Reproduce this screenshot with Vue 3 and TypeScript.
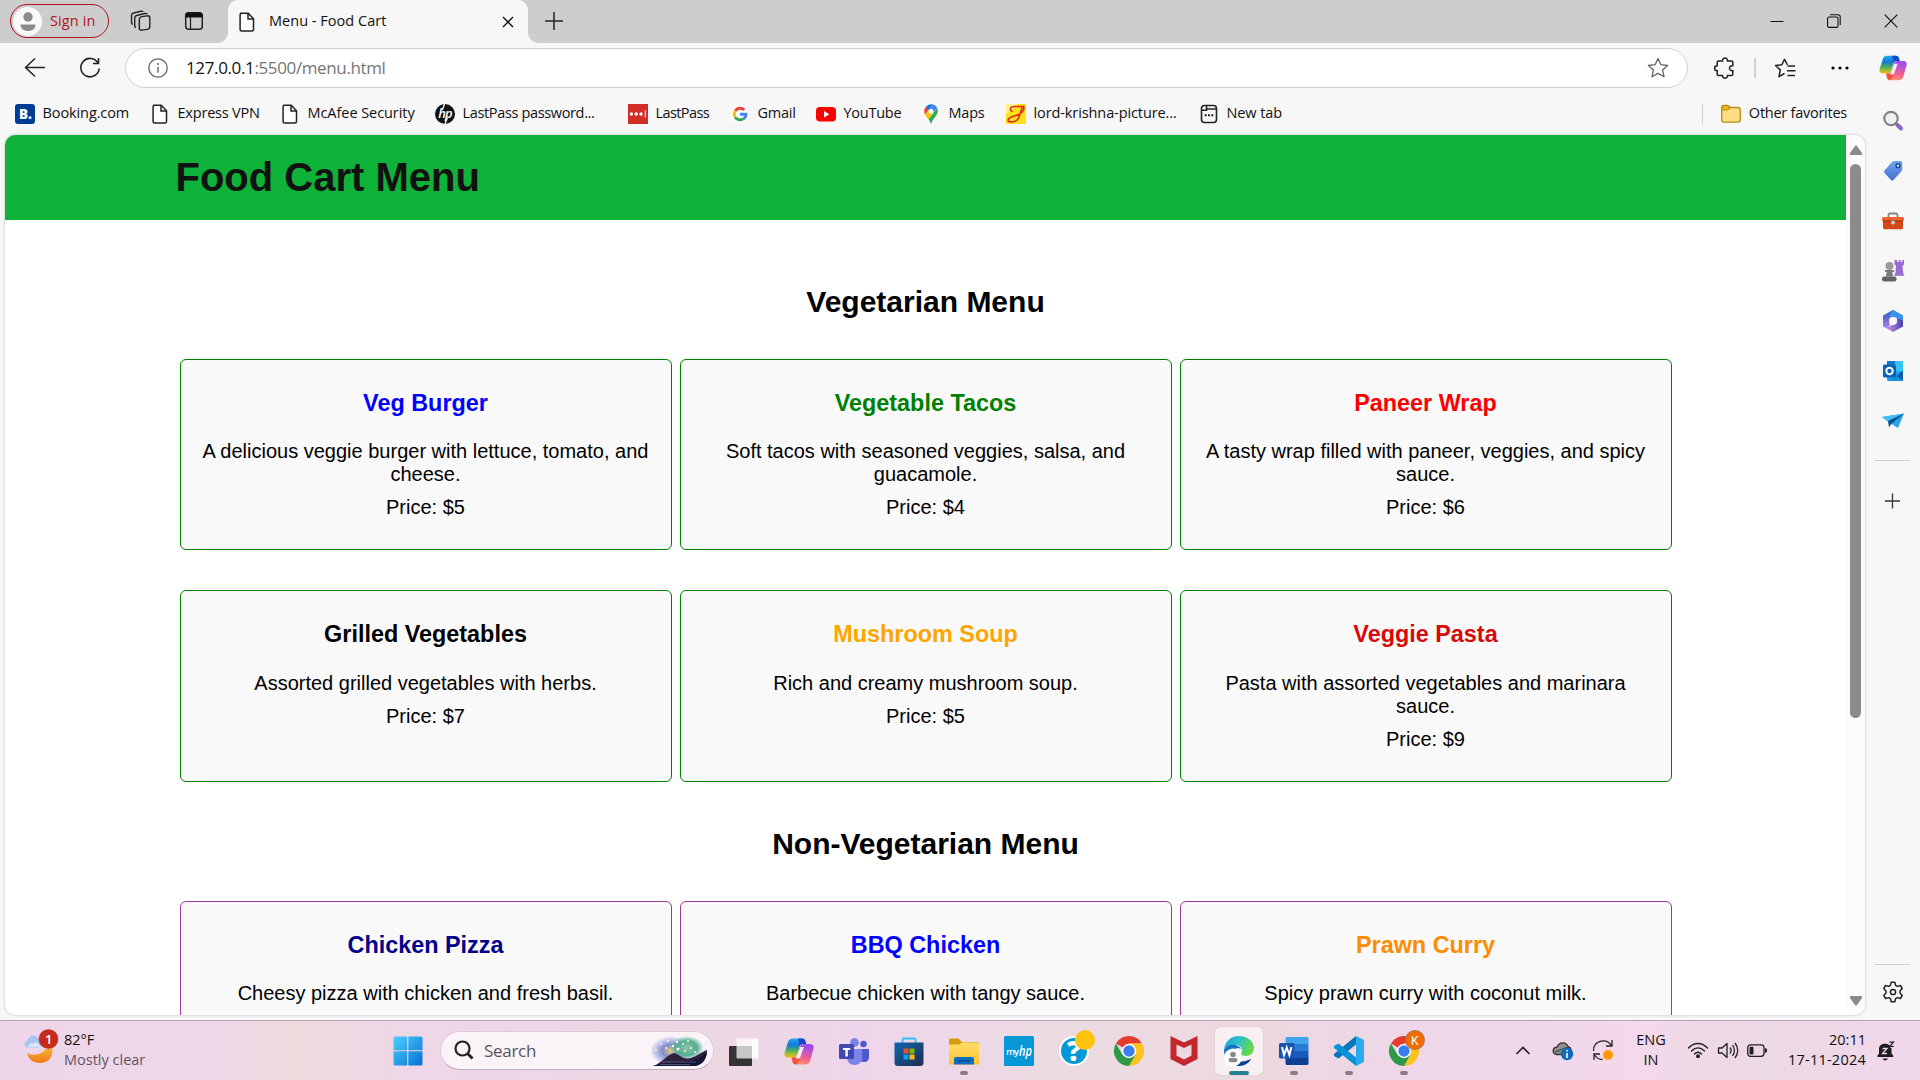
<script setup lang="ts">
interface Bookmark { label: string; icon: string; width: number; tracking: number }
interface Dish { name: string; color: string; text: string; price?: string }
interface TaskApp { icon: string; mark?: 'idle' | 'active' }

const page = '<path d="M3.2 1.2h8l5.3 5.6v10.7c0 .9-.6 1.5-1.5 1.5H4.6c-.9 0-1.500-.6-1.500-1.500V2.700c0-.9.600-1.500 1.500-1.500z" fill="#fff" stroke="#222" stroke-width="1.500"/><path d="M11 1.500v5.500h5.500" fill="none" stroke="#222" stroke-width="1.500"/>'
const copilot = '<path d="M9 1h9c2 0 3 1 3.500 3l.7 2.500h-3c-2 0-3 .7-3.600 2.600L13 17c-.700 2-1.600 3-3.600 3H4c-3 0-4-2.200-3.300-4.800L4 4.500C4.800 2.200 6.200 1 9 1z" fill="url(#cpA)"/><path d="M14 1h4c2 0 3 1 3.500 3l.7 2.500h-3c-1.800 0-2.800.5-3.500 2z" fill="#1c48c8"/><path d="M21 27h-9c-2 0-3-1-3.500-3l-.900-4h2c2 0 3-.8 3.600-2.600L16 9.500c.7-2 1.700-3 3.700-3H26c3 0 4.300 2.200 3.500 4.800L26 23.500c-.8 2.300-2.200 3.500-5 3.500z" fill="url(#cpB)"/><path d="M8.200 22l-.6-2h2c2 0 3-.8 3.600-2.600l1.200-3.400 1 8.500-3.400 4.500c-2 0-3-1-3.500-3z" fill="#f0503c"/><path d="M16.400 9.500h3.500l-3.400 9.800c-.4 1.200-1.100 1.700-2 1.700h-2.800z" fill="#f4ecf5"/>'
const chrome = '<path d="M15 15L2 7.500A15 15 0 0 1 28 7.500H15z" fill="#e33b2e"/><path d="M28 7.500A15 15 0 0 1 15 30l6.500-11.300L15 7.500z" fill="#fcc31e"/><path d="M15 30A15 15 0 0 1 2 7.500l6.500 11.300L15 22l6.500-3.300z" fill="#2c9a46"/><circle cx="15" cy="15" r="7.200" fill="#fff"/><circle cx="15" cy="15" r="5.700" fill="#3b7ded"/>'

const bookmarkIcons: Record<string, string> = {
  booking: '<rect width="20" height="20" rx="3" fill="#003b95"/><text x="4" y="15" font-family="Open Sans, sans-serif" font-size="13.500" font-weight="800" fill="#fff">B.</text>',
  page,
  hp: '<circle cx="10" cy="10" r="10" fill="#111"/><text x="3.200" y="14" font-family="Open Sans, sans-serif" font-size="13" font-weight="600" font-style="italic" textLength="14" fill="#fff">hp</text><path d="M9.500 0L7.300 6M12.300 14l-2.400 6" stroke="#fff" stroke-width="1.300"/>',
  lastpass: '<rect width="20" height="20" fill="#d32d27"/><g fill="#fff"><circle cx="3.400" cy="10" r="1.700"/><circle cx="8.200" cy="10" r="1.700"/><circle cx="13" cy="10" r="1.700"/><rect x="16.800" y="6.500" width="1" height="7"/></g>',
  google: '<circle cx="10" cy="10" r="9.500" fill="#fff"/><g fill="none" stroke-width="2.900"><path d="M5.100 7A5.900 5.900 0 0 1 14.300 6" stroke="#ea4335"/><path d="M5.100 7a6 6 0 0 0 0 6.200" stroke="#fbbc05"/><path d="M5.100 13.200a5.900 5.900 0 0 0 8.500 1.500" stroke="#34a853"/><path d="M10 10.200h6c0 1.900-.8 3.500-2.300 4.500" stroke="#4285f4"/></g>',
  youtube: '<rect y="3" width="20" height="14.500" rx="4" fill="#f00"/><path d="M8 7l5.300 3.200L8 13.500z" fill="#fff"/>',
  maps: '<path d="M3.200 7.300a6.800 6.800 0 0 1 1.700-4.600L8 5.500l-4 5c-.5-1-.8-2-.8-3.200z" fill="#ea4335"/><path d="M4.900 2.700A6.700 6.700 0 0 1 12.300.6L7.600 6z" fill="#1a73e8"/><path d="M12.300.6a6.800 6.800 0 0 1 4 3.600l-4.500 5.300L7.600 6z" fill="#4285f4"/><path d="M4 10.500L7.600 6l4.200 3.500-4.300 5.800C6 13.700 4.800 12.300 4 10.500z" fill="#fbbc04"/><path d="M16.300 4.200c1.400 3.200.1 6-2 8.500-2.100 2.400-3.100 4.300-4.300 7.300-.6-1.700-1.300-3.200-2.500-4.700z" fill="#34a853"/><circle cx="10" cy="7.300" r="2.500" fill="#fff"/>',
  krishna: '<rect width="20" height="20" fill="#ffe11a"/><path d="M0 0h12L5 7 0 10z" fill="#fff38a"/><path d="M6.500 7.500C3 6.500 4 2.500 8 2.500h8.500C15 5 14.500 12 11.500 15.500 8.500 19 1.500 18.500 2 16c.7-3.500 9-4 12.500-6.500 3-2 4-5 3-8" fill="none" stroke="#e0291c" stroke-width="1.500"/>',
  newtab: '<rect x="2.500" y="1.500" width="15" height="17" rx="3" fill="none" stroke="#222" stroke-width="1.600"/><path d="M3 6.200h4.500V2M7.500 5H17" fill="none" stroke="#222" stroke-width="1.500"/><path d="M5.700 11.300h2M9 11.300h2M12.300 11.300h2" stroke="#222" stroke-width="1.900"/>',
}

const bookmarks: Bookmark[] = [
  { label: 'Booking.com', icon: 'booking', width: 135, tracking: -0.1 },
  { label: 'Express VPN', icon: 'page', width: 130, tracking: -0.2 },
  { label: 'McAfee Security', icon: 'page', width: 155, tracking: -0.06 },
  { label: 'LastPass password...', icon: 'hp', width: 193, tracking: -0.35 },
  { label: 'LastPass', icon: 'lastpass', width: 102, tracking: -0.6 },
  { label: 'Gmail', icon: 'google', width: 86, tracking: -0.25 },
  { label: 'YouTube', icon: 'youtube', width: 105, tracking: -0.25 },
  { label: 'Maps', icon: 'maps', width: 85, tracking: -0.2 },
  { label: 'lord-krishna-picture...', icon: 'krishna', width: 193, tracking: -0.1 },
  { label: 'New tab', icon: 'newtab', width: 90, tracking: -0.1 },
]

const vegetarian: Dish[] = [
  { name: 'Veg Burger', color: 'blue', text: 'A delicious veggie burger with lettuce, tomato, and cheese.', price: '$5' },
  { name: 'Vegetable Tacos', color: 'green', text: 'Soft tacos with seasoned veggies, salsa, and guacamole.', price: '$4' },
  { name: 'Paneer Wrap', color: 'red', text: 'A tasty wrap filled with paneer, veggies, and spicy sauce.', price: '$6' },
  { name: 'Grilled Vegetables', color: 'black', text: 'Assorted grilled vegetables with herbs.', price: '$7' },
  { name: 'Mushroom Soup', color: 'orange', text: 'Rich and creamy mushroom soup.', price: '$5' },
  { name: 'Veggie Pasta', color: '#d80909', text: 'Pasta with assorted vegetables and marinara sauce.', price: '$9' },
]
const nonVegetarian: Dish[] = [
  { name: 'Chicken Pizza', color: 'darkblue', text: 'Cheesy pizza with chicken and fresh basil.' },
  { name: 'BBQ Chicken', color: 'blue', text: 'Barbecue chicken with tangy sauce.' },
  { name: 'Prawn Curry', color: 'darkorange', text: 'Spicy prawn curry with coconut milk.' },
]

const sidebarIcons: string[] = [
  '<circle cx="9" cy="8.500" r="6.700" fill="#eef2f3" stroke="#858585" stroke-width="2.200"/><path d="M15.500 15l3.500 3.500" stroke="#8f62cf" stroke-width="4" stroke-linecap="round"/><path d="M13.500 13l1.500 1.500" stroke="#777" stroke-width="2.500"/>',
  '<path d="M2.500 10.500L10 2c.6-.7 1.300-1 2.200-1h6.500c.9 0 1.500.6 1.500 1.500v6.800c0 .8-.3 1.500-.9 2.100l-8 8.500c-.6.700-1.600.7-2.300 0l-6.500-7c-.6-.7-.6-1.700 0-2.400z" fill="url(#tag)"/><circle cx="16" cy="5.700" r="1.900" fill="#e6efff" stroke="#28468c" stroke-width="1.500"/>',
  '<path d="M6.500 8V5c0-.9.600-1.500 1.500-1.500h6c.9 0 1.500.6 1.500 1.500v3" fill="none" stroke="#858585" stroke-width="1.800"/><rect x="0" y="7" width="22" height="4" rx="1.500" fill="#f0622d"/><path d="M1 11h20v7c0 .700-.5 1.200-1.200 1.200H2.200C1.500 19.200 1 18.700 1 18z" fill="#d4481a"/><path d="M1 11h20" stroke="#8d2a0b"/><circle cx="11" cy="12.500" r="2" fill="#d0d0d0"/>',
  '<path d="M13 0h2v2h1.700V0h2v2h1.600V0H22v4.500l-1.500 1.300.7 7.700 1 1v1.200h-9.800v-1.200l1-1 .6-7.700-1.500-1.300V0z" fill="#9a6bd0"/><circle cx="7.500" cy="6" r="4" fill="#9a9a9a"/><path d="M3 10h9v2h-1.800l1 4.500H3.800l1-4.500H3z" fill="#7b7b7b"/><rect x="0" y="16.500" width="14.500" height="5" rx="2" fill="#656565"/>',
  '<path d="M11 0L1 5.500v11L6 19l2-5.500V8l8-5z" fill="url(#m365a)"/><path d="M11 0l10 5.500V15l-6-1V8.500L8 4z" fill="#2f9fee"/><path d="M21 10v6.500L11 22l-7-4 7-3.500 4-2.500V8z" fill="url(#m365b)"/><path d="M11 0L7 6l4 2 4-1 6 4V5.500z" fill="#3b93e8"/><circle cx="11" cy="11" r="4" fill="#f7f7f7"/>',
  '<rect x="5" y="1" width="16" height="20" rx="1.500" fill="#1ba2e8"/><path d="M5 1h8v10H5z" fill="#0b78cb"/><path d="M13 1h8v10h-8z" fill="#36c2f2"/><path d="M21 11v10H6z" fill="#1490df"/><path d="M21 11l-7 5 7 4z" fill="#0f5aa5"/><rect x="1" y="4.500" width="13" height="13" rx="1.500" fill="#0964b8"/><circle cx="7.500" cy="11" r="3.200" fill="none" stroke="#fff" stroke-width="2"/>',
  '<path d="M0 7l22-3.500-6 14.500-6.500-4z" fill="#25a4e8"/><path d="M0 7l22-3.500L6 11.500z" fill="#43bdf3"/><path d="M22 3.500L6 11l1 6.500 2.500-4z" fill="#0a4f93"/>',
]

const apps: TaskApp[] = [
  { icon: '<rect x="0" y="10" width="23" height="20" rx="1" fill="#333"/><rect x="7.500" y="2.500" width="22" height="20" rx="1" fill="#fff" opacity=".72"/><rect x="23" y="3" width="6" height="19" fill="#fff" opacity=".6"/>' },
  { icon: `<g transform="translate(0 1.500)">${copilot}</g>` },
  { icon: '<circle cx="15.500" cy="6.500" r="4.400" fill="#7b83eb"/><circle cx="24.500" cy="8" r="3.200" fill="#5059c9"/><path d="M20 13h10v8c0 3-2 5-5 5s-5-2-5-5z" fill="#5059c9"/><path d="M8 13h15v8.500C23 26 20 29 15.500 29S8 26 8 21.500z" fill="#7b83eb"/><rect x="0" y="8" width="15" height="15" rx="1.500" fill="#4148b0"/><path d="M4 12h7.200v2H8.800v6.500H6.400V14H4z" fill="#fff"/>' },
  { icon: '<path d="M8.500 7V3.500c0-.6.400-1 1-1h11c.6 0 1 .4 1 1V7" fill="none" stroke="#2bc3f5" stroke-width="1.800"/><path d="M.5 6.500h29V26c0 3-1 4-4 4h-21c-3 0-4-1-4-4z" fill="url(#store)"/><path d="M9.500 12.500h5v5h-5z" fill="#f25022"/><path d="M15.500 12.500h5v5h-5z" fill="#7fba00"/><path d="M9.500 18.500h5v5h-5z" fill="#00a4ef"/><path d="M15.500 18.500h5v5h-5z" fill="#ffb900"/>' },
  { icon: '<path d="M0 4c0-1 .6-1.500 1.500-1.500h8L13 6h15c1.200 0 2 .6 2 1.500V14H0z" fill="#d79a10"/><path d="M0 8.500h10L13 6.500h15c1.200 0 2 .6 2 1.500v20.500H0z" fill="url(#folder)"/><path d="M5 28.500V23c0-1.200.8-2 2-2h16c1.200 0 2 .8 2 2v5.500z" fill="#0d6fc4"/><path d="M8.500 25h13" stroke="#0a3f79" stroke-width="1.200"/>', mark: 'idle' },
  { icon: '<rect width="30" height="30" rx="1.500" fill="#0597d6"/><text x="2" y="18.500" font-family="Open Sans, sans-serif" font-size="9.500" font-weight="600" textLength="13" fill="#fff">my</text><text x="15" y="19.500" font-family="Open Sans, sans-serif" font-size="14" font-weight="600" font-style="italic" textLength="13" lengthAdjust="spacingAndGlyphs" fill="#fff">hp</text>' },
  { icon: '<circle cx="15" cy="15" r="15" fill="#fff"/><circle cx="15" cy="15" r="13" fill="#0597d6"/><text x="8" y="25" font-family="Open Sans, sans-serif" font-size="28" font-weight="800" fill="#fff">?</text><circle cx="26" cy="4" r="10" fill="#ffc20e"/>' },
  { icon: chrome },
  { icon: '<path d="M1.500 0L15 6.500 28.500 0v23L15 30 1.500 23zM7.500 8.500v11L15 23.500l7.500-4v-11L15 12z" fill="#c1272d" fill-rule="evenodd"/>' },
  { icon: '<path d="M0 14C1 5 7 0 15 0c9 0 15 6 15 12 0 5-4 8-8 8-3 0-5-1-5-2 0-1 1-1 1-4 0-3-3-5-7-5C6 9 2 10 0 14z" fill="url(#edge)"/><path d="M0 14c2-4 6-6 11-5 3 .6 5 2 6 4-5-3-8 1-7 6 1 5 6 8 12 6l5-2c-3 5-8 7-13 7C6 30 0 23 0 14z" fill="#1272c5"/><path d="M10 19c0 7 8 9 17 4-4 7-13 9-19 4z" fill="#0b3f89"/><circle cx="9" cy="21.500" r="9" fill="#fff"/><circle cx="9" cy="18.500" r="2.800" fill="#888"/><rect x="4.500" y="22" width="9" height="4.200" rx="2.100" fill="#888"/>', mark: 'active' },
  { icon: '<path d="M6.500 2.500c0-.8.600-1.500 1.500-1.500h20c.9 0 1.500.7 1.500 1.500V8h-23z" fill="#41a5ee"/><path d="M6.500 8h23v7h-23z" fill="#2b7cd3"/><path d="M6.500 15h23v7h-23z" fill="#185abd"/><path d="M6.500 22h23v5.500c0 .9-.6 1.500-1.500 1.500H8c-.900 0-1.500-.6-1.500-1.500z" fill="#103f91"/><rect x="0" y="7" width="15.500" height="15.500" rx="1.500" fill="#1853ae"/><path d="M3 11l2 8 2.700-7.500 2.700 7.500 2-8" fill="none" stroke="#fff" stroke-width="2"/>', mark: 'idle' },
  { icon: '<path d="M22 0L30 4v22l-8 4z" fill="#2aabed"/><path d="M22 0v8.500L4.500 22.500 0 20v-2z" fill="#0477bd"/><path d="M22 30v-8.500L4.500 7.500 0 10v2z" fill="#0a93d8"/>', mark: 'idle' },
  { icon: chrome + '<circle cx="26" cy="4" r="10" fill="#9c7468"/><circle cx="26" cy="4" r="9.200" fill="#ef6c00"/><text x="22" y="8.500" font-family="Roboto, sans-serif" font-size="12" fill="#fff">K</text>', mark: 'idle' },
]
</script>

<template>
  <div class="screen">
    <svg class="defs" width="0" height="0">
      <defs>
        <linearGradient id="cpA" x1="0" y1="0" x2="0" y2="1"><stop offset="0" stop-color="#22aaf2" /><stop offset=".35" stop-color="#1477d4" /><stop offset=".65" stop-color="#55b355" /><stop offset="1" stop-color="#f7c414" /></linearGradient>
        <linearGradient id="cpB" x1="0.3" y1="0" x2="0" y2="1"><stop offset="0" stop-color="#a24df0" /><stop offset=".5" stop-color="#ef5c96" /><stop offset="1" stop-color="#ffa05e" /></linearGradient>
        <linearGradient id="tag" x1="0" y1="0" x2="0" y2="1"><stop offset="0" stop-color="#70a7f3" /><stop offset="1" stop-color="#426fcf" /></linearGradient>
        <linearGradient id="m365a" x1="0" y1="0" x2="0" y2="1"><stop offset="0" stop-color="#2a57c7" /><stop offset="1" stop-color="#b884ea" /></linearGradient>
        <linearGradient id="m365b" x1="0" y1="0" x2="1" y2="0"><stop offset="0" stop-color="#d296e8" /><stop offset="1" stop-color="#4b3fb0" /></linearGradient>
        <linearGradient id="store" x1="0" y1="0" x2="1" y2="1"><stop offset="0" stop-color="#0d66b0" /><stop offset="1" stop-color="#1f2d4d" /></linearGradient>
        <linearGradient id="folder" x1="0" y1="0" x2="0" y2="1"><stop offset="0" stop-color="#ffdc6a" /><stop offset="1" stop-color="#fcc42c" /></linearGradient>
        <linearGradient id="edge" x1="0" y1="0" x2="1" y2=".4"><stop offset="0" stop-color="#1b9be0" /><stop offset=".5" stop-color="#2cc2c9" /><stop offset="1" stop-color="#67d84b" /></linearGradient>
        <linearGradient id="win" x1="0" y1="0" x2="1" y2="1"><stop offset="0" stop-color="#4fd0ff" /><stop offset="1" stop-color="#0370cf" /></linearGradient>
        <linearGradient id="moon" x1="0" y1="0" x2="0" y2="1"><stop offset="0" stop-color="#f7b52e" /><stop offset="1" stop-color="#ee7a1c" /></linearGradient>
        <radialGradient id="glowA"><stop offset="0" stop-color="#f0c97c" /><stop offset=".4" stop-color="#7f8ec8" /><stop offset="1" stop-color="#6b7fe0" stop-opacity="0" /></radialGradient>
        <radialGradient id="glowB"><stop offset="0" stop-color="#8fc5a4" /><stop offset=".6" stop-color="#56ad98" /><stop offset="1" stop-color="#50b59f" stop-opacity="0" /></radialGradient>
      </defs>
    </svg>

    <header class="titlebar">
      <div class="signin">
        <span class="avatar"><svg width="29" height="29" viewBox="0 0 29 29"><circle cx="15" cy="10" r="4.700" fill="#8b8b8b" /><path d="M7.500 17.500h15c0 4-3 6.500-7.500 6.500s-7.500-2.500-7.500-6.500z" fill="#8b8b8b" /></svg></span>
        <span class="signin-text">Sign in</span>
      </div>
      <svg class="ic-work" width="22" height="22" viewBox="0 0 22 22" fill="none" stroke="#222" stroke-width="1.400"><rect x="9.300" y="6.300" width="10.500" height="13.500" rx="2.500" transform="skewY(-8) translate(0 2)" /><path d="M6 17.500c-1-.4-1.300-1-1.300-2V8c0-1.300.7-2.200 2-2.500L15 3.500c1-.2 1.700 0 2.200.7M2.700 14.500c-1-.5-1.200-1-1.200-2V5.500c0-1.300.7-2.200 2-2.500L11 1.200c1-.2 1.700 0 2.300.7" /></svg>
      <svg class="ic-tabs" width="20" height="20" viewBox="0 0 20 20"><rect x="1.700" y="1.700" width="16.600" height="16.600" rx="3" fill="none" stroke="#222" stroke-width="1.500" /><path d="M1.500 6.500V4.500c0-2 1-3 3-3h11c2 0 3 1 3 3v2z" fill="#111" /><path d="M6.500 6v12" stroke="#222" stroke-width="1.300" /></svg>
      <div class="tab">
        <svg width="20" height="20" viewBox="0 0 20 20" v-html="page" />
        <span class="tab-title">Menu - Food Cart</span>
        <svg class="tab-close" width="12" height="12" viewBox="0 0 12 12"><path d="M1 1l10 10M11 1L1 11" stroke="#111" stroke-width="1.400" /></svg>
      </div>
      <svg class="ic-plus" width="18" height="18" viewBox="0 0 18 18"><path d="M9 0v18M0 9h18" stroke="#222" stroke-width="1.500" /></svg>
      <div class="controls">
        <svg width="14" height="14" viewBox="0 0 14 14"><path d="M.5 7.500h13" stroke="#111" /></svg>
        <svg width="14" height="14" viewBox="0 0 14 14" fill="none" stroke="#111" stroke-width="1.100"><rect x=".6" y="3" width="10.400" height="10.400" rx="1.500" /><path d="M3 .7h8c1.300 0 2.200.8 2.200 2.200v8" /></svg>
        <svg width="14" height="14" viewBox="0 0 14 14"><path d="M.7.700l12.600 12.600M13.300.7L.7 13.300" stroke="#111" stroke-width="1.200" /></svg>
      </div>
    </header>

    <nav class="toolbar">
      <svg class="ic-back" width="22" height="24" viewBox="0 0 22 24" fill="none" stroke="#222" stroke-width="1.500"><path d="M21 11.500H2M11 2.500l-9.500 9 9.500 9" /></svg>
      <svg class="ic-reload" width="22" height="26" viewBox="0 0 22 26" fill="none" stroke="#222" stroke-width="1.600"><path d="M19 8A9.200 9.200 0 1 0 20.200 13.500M19.500 3v5.500H14" /></svg>
      <div class="address">
        <svg class="ic-info" width="20" height="20" viewBox="0 0 20 20"><circle cx="10" cy="10" r="9.200" fill="none" stroke="#666" stroke-width="1.300" /><path d="M10 8.700v6" stroke="#666" stroke-width="1.400" /><circle cx="10" cy="5.900" r="1" fill="#666" /></svg>
        <span class="url">127.0.0.1<i>:5500/menu.html</i></span>
        <svg class="ic-star" width="22" height="22" viewBox="0 0 22 22"><path d="M11 1.500l2.900 6.200 6.700.8-5 4.600 1.400 6.600-6-3.300-6 3.300 1.400-6.600-5-4.600 6.700-.8z" fill="none" stroke="#666" stroke-width="1.300" stroke-linejoin="round" /></svg>
      </div>
      <svg class="ic-ext" width="22" height="22" viewBox="0 0 22 22"><path d="M4.500 4h4c-.3-4 5.300-4 5 0h4c.8 0 1.300.5 1.300 1.300v3.400c-4.400-.5-4.400 5.500 0 5v3.500c0 .8-.5 1.300-1.300 1.300h-4c.3 3.700-5.300 3.700-5 0h-4c-.8 0-1.300-.5-1.300-1.300v-3.500c-3.400 0-3.400-5 0-5V5.300C3.200 4.500 3.700 4 4.500 4z" fill="none" stroke="#222" stroke-width="1.500" /></svg>
      <span class="sep"></span>
      <svg class="ic-fav" width="22" height="22" viewBox="0 0 22 22" fill="none" stroke="#222" stroke-width="1.500" stroke-linejoin="round"><path d="M13.500 8l-3-5.700-2.600 5.500-6.400.7 4.800 4.400L5 19.700l5.500-3.200M13.500 9H21M13 13.700h8.500M13.500 18.400H21" /></svg>
      <svg class="ic-dots" width="18" height="4" viewBox="0 0 18 4"><circle cx="2" cy="2" r="1.600" /><circle cx="9" cy="2" r="1.600" /><circle cx="16" cy="2" r="1.600" /></svg>
      <svg class="ic-copilot" width="28" height="28" viewBox="0 0 30 28" v-html="copilot" />
    </nav>

    <div class="middle">
      <div class="left">
        <div class="bookmarks">
          <div v-for="b in bookmarks" :key="b.label" class="bookmark" :style="{ width: b.width + 'px', letterSpacing: b.tracking + 'px' }">
            <svg width="20" height="20" viewBox="0 0 20 20" v-html="bookmarkIcons[b.icon]" />
            <span>{{ b.label }}</span>
          </div>
          <div class="others">
            <svg width="20" height="20" viewBox="0 0 20 20"><path d="M.7 4c0-1.500.8-2.500 2.300-2.500h3c1.500 0 2 2 3.500 2H17c1.500 0 2.300.8 2.300 2.300v10c0 1.500-.8 2.300-2.300 2.300H3c-1.500 0-2.300-.8-2.300-2.300z" fill="#ffdd80" stroke="#b98b1a" stroke-width="1.300" /><path d="M.7 6h5c1.500 0 2-1 3.500-2.500C8 2 7 1.500 6 1.500H3C1.500 1.500.7 2.500.7 4z" fill="#e9b71d" stroke="#b98b1a" stroke-width="1.200" /></svg>
            <span>Other favorites</span>
          </div>
        </div>
        <main class="viewport">
          <div class="document">
            <div class="banner"><h1>Food Cart Menu</h1></div>
            <section class="menu">
              <h2>Vegetarian Menu</h2>
              <div class="cards">
                <article v-for="d in vegetarian" :key="d.name" class="card">
                  <h3 :style="{ color: d.color }">{{ d.name }}</h3>
                  <p>{{ d.text }}</p>
                  <p>Price: {{ d.price }}</p>
                </article>
              </div>
              <h2 class="second">Non-Vegetarian Menu</h2>
              <div class="cards">
                <article v-for="d in nonVegetarian" :key="d.name" class="card purple">
                  <h3 :style="{ color: d.color }">{{ d.name }}</h3>
                  <p>{{ d.text }}</p>
                </article>
              </div>
            </section>
          </div>
          <div class="scrollbar">
            <svg width="14" height="10" viewBox="0 0 14 10"><path d="M6 1Q7-.3 8 1l5 7q.7 2-1 2H2q-1.700 0-1-2z" fill="#8b8b8b" /></svg>
            <span class="thumb"></span>
            <svg class="down" width="14" height="10" viewBox="0 0 14 10"><path d="M6 9q1 1.300 2 0l5-7q.7-2-1-2H2Q.3 0 1 2z" fill="#8b8b8b" /></svg>
          </div>
        </main>
      </div>
      <aside class="sidebar">
        <svg v-for="(s, i) in sidebarIcons" :key="i" width="22" height="22" viewBox="0 0 22 22" v-html="s" />
        <span class="rule"></span>
        <svg class="side-plus" width="16" height="16" viewBox="0 0 16 16"><path d="M7.500 .5v15M0 8h15" stroke="#333" stroke-width="1.300" /></svg>
        <div class="side-foot">
          <span class="rule"></span>
          <svg width="22" height="22" viewBox="0 0 22 22" fill="none" stroke="#222" stroke-width="1.500" stroke-linejoin="round"><path d="M9.200 1.200h3.600l.8 3.200 1.700 1 3.200-.9 1.800 3.100L18 10v2l2.300 2.400-1.800 3.100-3.200-.9-1.700 1-.8 3.200H9.200l-.8-3.200-1.700-1-3.200.9-1.800-3.100L4 12v-2L1.700 7.600l1.800-3.100 3.200.9 1.700-1z" /><circle cx="11" cy="11" r="2.600" /></svg>
        </div>
      </aside>
    </div>

    <footer class="taskbar">
      <div class="weather">
        <svg width="36" height="36" viewBox="0 0 36 36"><path d="M3 22c6 3 14 2 19-4l6.500-1C29 27 24 32 16 32 9 32 4 28 3 22z" fill="url(#moon)" /><path d="M4 16.500c-4-.3-5-5.500-.5-7C5 3.500 12 3 14 7.500c5 0 6 9 0 9z" fill="#a9c4ee" /><path d="M5 16c-2-3 2-5 4-3 2-3 7-1 7 3z" fill="#d8e5fa" /><circle cx="24.500" cy="8" r="9.800" fill="#c42b1c" /><text x="21" y="13" font-family="Open Sans, sans-serif" font-size="13" font-weight="600" fill="#fff">1</text></svg>
        <div class="weather-text"><span>82°F</span><span class="dim">Mostly clear</span></div>
      </div>
      <svg class="start" width="30" height="30" viewBox="0 0 30 30"><path d="M2 .5h12.200v13.700H.5V2Q.5.5 2 .5zM15.300.5H28q1.500 0 1.500 1.500v12.200H15.300zM.5 15.300h13.700v14.200H2q-1.500 0-1.500-1.500zM15.300 15.300h14.200V28q0 1.500-1.500 1.500H15.300z" fill="url(#win)" /></svg>
      <div class="search">
        <svg width="20" height="20" viewBox="0 0 20 20" fill="none" stroke="#222" stroke-width="2.200"><circle cx="8.500" cy="8.500" r="7" /><path d="M13.500 13.500l5 5" stroke-width="2.800" /></svg>
        <span>Search</span>
        <svg class="scene" width="62" height="34" viewBox="0 0 62 34"><ellipse cx="23" cy="17" rx="21" ry="15" fill="url(#glowA)" /><ellipse cx="39" cy="14" rx="17" ry="12" fill="url(#glowB)" /><path d="M6 32c8-4 13-11 20-13 5 1 8 6 14 5.500 8-1 12-6 19-8.500 0 8-4 14-11 16z" fill="#30213f" /><path d="M4 32c14-4 24-4 36-5s14-5 19-9c-1 9-6 14-14 14z" fill="#151536" /><path d="M14 28h34M12 30.500h30" stroke="#7b88b0" stroke-width=".8" opacity=".7" /><g fill="#fff5d8"><circle cx="8" cy="16" r="1" /><circle cx="13" cy="10" r="1" /><circle cx="20" cy="7" r="1" /><circle cx="25" cy="12" r="1.300" /><circle cx="29" cy="8" r="1.200" /><circle cx="30" cy="15" r="1.600" /><circle cx="35" cy="10" r="1" /><circle cx="37" cy="17" r="1" /><circle cx="43" cy="14" r="1" /><circle cx="40" cy="7" r="1" /><circle cx="18" cy="14" r="1" /><circle cx="47" cy="18" r="1" /></g></svg>
      </div>
      <div class="apps">
        <div v-for="(a, i) in apps" :key="i" class="app" :class="a.mark">
          <svg width="30" height="30" viewBox="0 0 30 30" v-html="a.icon" />
        </div>
      </div>
      <div class="tray">
        <svg class="t-chev" width="16" height="10" viewBox="0 0 16 10"><path d="M1.500 8L8 1.500 14.500 8" fill="none" stroke="#222" stroke-width="1.600" /></svg>
        <svg class="t-cloud" width="22" height="20" viewBox="0 0 22 20"><path d="M4.500 13.500C-.5 12.500.5 6.500 5 6 7 .5 14 .5 16 5.500c4 1 4 8 0 8z" fill="#909090" stroke="#333" stroke-width="1.300" /><path d="M3 11L16 6" stroke="#555" stroke-width="1.500" /><circle cx="15" cy="13" r="6.200" fill="#0f6cbd" /><path d="M15 12v5M15 9v1.600" stroke="#fff" stroke-width="1.600" /></svg>
        <svg class="t-sync" width="22" height="22" viewBox="0 0 22 22" fill="none" stroke="#222" stroke-width="1.300"><path d="M1.500 11C1 .5 14-2.500 19.500 5.500M20 0v6h-6M2 20v-6h6M2.500 15c2 3 4.500 4.500 8 4.500" /><circle cx="16" cy="15" r="5" fill="#ff9800" stroke="none" /></svg>
        <div class="lang"><span>ENG</span><span>IN</span></div>
        <svg class="t-wifi" width="22" height="18" viewBox="0 0 22 18" fill="none" stroke="#222" stroke-width="1.400" stroke-linecap="round"><path d="M1.500 6c5.500-6 13.500-6 19 0M4.500 9c4-4.200 9-4.200 13 0M7.500 12c2.200-2.300 4.800-2.300 7 0" /><circle cx="11" cy="14.300" r="1.300" fill="#222" /></svg>
        <svg class="t-vol" width="22" height="18" viewBox="0 0 22 18" fill="none" stroke="#222" stroke-width="1.300" stroke-linejoin="round"><path d="M1.500 6H5l5-4.500v14L5 11H1.500zM13 5.500c1.300 1.800 1.300 4.200 0 6M15.500 3.200c2.500 3 2.500 7.600 0 10.600M18 1c3.600 4.500 3.600 10.500 0 15" /></svg>
        <svg class="t-bat" width="20" height="14" viewBox="0 0 20 14"><rect x=".7" y=".8" width="16.300" height="11.500" rx="2.800" fill="none" stroke="#222" stroke-width="1.300" /><rect x="2.500" y="2.800" width="4" height="7.600" rx="1" fill="#222" /><path d="M18 4l2 1v3l-2 1z" fill="#222" /></svg>
        <div class="clock"><span>20:11</span><span class="date">17-11-2024</span></div>
        <svg class="t-bell" width="18" height="20" viewBox="0 0 18 20"><path d="M.5 16v-1.500L2 12.500V8c0-7 12-7 12.500 0v4.500l1.700 2V16z" fill="#1d1d1d" /><path d="M5.500 17.500h5.500c-1 2.500-4.500 2.500-5.500 0z" fill="#1d1d1d" /><path d="M5.500 7.500h4.500l-4.500 5h4.500" fill="none" stroke="#f0d8ea" stroke-width="1.300" /><path d="M11.500 0H18v6.500h-5z" fill="#f2d7eb" /><path d="M12.500 1.200h4l-3.800 4.200h4" fill="none" stroke="#1d1d1d" stroke-width="1.200" /></svg>
      </div>
    </footer>
  </div>
</template>

<style>
body { margin: 0; overflow: hidden; }
</style>

<style scoped>
* { box-sizing: border-box; }
svg { display: block; flex: none; overflow: visible; }
.defs { position: absolute; }
.screen { width: 1920px; height: 1080px; display: flex; flex-direction: column; background: #f7f7f7; color: #111; font-family: "Open Sans", "Noto Sans", sans-serif; font-size: 14.5px; white-space: nowrap; overflow: hidden; }

.titlebar { height: 43px; flex: none; display: flex; background: #cdcdcd; }
.signin { width: 99px; height: 34px; margin: 4px 0 0 10px; border: 1.5px solid #b3131b; border-radius: 17px; display: flex; align-items: center; color: #b3131b; }
.avatar { width: 29px; height: 29px; margin-left: 2px; border-radius: 50%; background: #f9f9f9; }
.signin-text { margin: -2px 0 0 8px; letter-spacing: 0.1px; }
.ic-work { margin: 10px 0 0 21px; }
.ic-tabs { margin: 11px 0 0 32px; }
.tab { position: relative; width: 300px; height: 43px; margin-left: 24px; padding: 0 14px 0 9px; display: flex; align-items: center; background: #f7f7f7; border-radius: 10px 10px 0 0; }
.tab::before, .tab::after { content: ""; position: absolute; bottom: 0; width: 10px; height: 10px; }
.tab::before { left: -10px; background: radial-gradient(circle at 0 0, #cdcdcd 9.500px, #f7f7f7 10px); }
.tab::after { right: -10px; background: radial-gradient(circle at 100% 0, #cdcdcd 9.500px, #f7f7f7 10px); }
.tab-title { margin: -2px 0 0 12px; letter-spacing: 0.02px; }
.tab-close { margin-left: auto; }
.ic-plus { margin: 12px 0 0 17px; }
.controls { margin: 14px 22px 0 auto; display: flex; gap: 43px; }

.toolbar { height: 49px; flex: none; display: flex; align-items: center; }
.ic-back { margin-left: 24px; }
.ic-reload { margin-left: 33px; }
.address { width: 1563px; height: 40px; margin-left: 24px; padding: 0 18px 0 22px; display: flex; align-items: center; background: #fff; border: 1px solid #cfcfcf; border-radius: 20px; }
.url { margin: -1px 0 0 18px; font-size: 17px; letter-spacing: -0.37px; }
.url i { font-style: normal; color: #757575; }
.ic-star { margin-left: auto; }
.ic-ext { margin-left: 26px; }
.sep { width: 1.5px; height: 20px; margin-left: 18px; background: #cfcfcf; }
.ic-fav { margin-left: 18px; }
.ic-dots { margin-left: 35px; }
.ic-copilot { margin-left: 30px; }

.middle { height: 928px; flex: none; display: flex; }
.left { width: 1870px; flex: none; }
.bookmarks { height: 43px; padding-left: 15px; display: flex; align-items: center; }
.bookmark { flex: none; display: flex; align-items: center; gap: 8px; }
.bookmark span, .others span { margin: -2px 0 0 -0.5px; }
.others { height: 20px; margin: 0 23px 0 auto; padding-left: 18px; display: flex; align-items: center; gap: 8px; border-left: 1px solid #cfcfcf; letter-spacing: -0.25px; }

.viewport { width: 1860px; height: 880px; margin-left: 5px; display: flex; background: #fff; border-radius: 10px; overflow: hidden; box-shadow: 0 0 3px rgba(0, 0, 0, .25); }
.document { width: 1841px; height: 880px; overflow: hidden; color: #000; font-family: "Liberation Sans", Arial, sans-serif; font-size: 20px; line-height: 23px; }
.banner { height: 85px; padding: 19px 170.5px; background: #0eb238; }
h1 { margin: 0; font-size: 40px; line-height: 46px; color: #111; }
.menu { width: 1500px; margin: 65px 0 0 170.5px; text-align: center; }
h2 { margin: 0 0 40px; font-size: 30px; line-height: 34px; }
h2.second { margin-top: 45px; }
.cards { display: grid; grid-template-columns: repeat(3, 492px); grid-template-rows: 191px; grid-auto-rows: 192px; gap: 40px 8px; padding-left: 4.5px; }
.card { padding: 30px 20.5px 30px 19.5px; border: 1px solid green; border-radius: 6px; background: #f9f9f9; white-space: normal; }
.card:nth-child(n + 4) h3 + p { margin-top: 24px; }
.card.purple { border-color: #963c96; }
h3 { margin: 0; font-size: 23.4px; line-height: 27px; }
h3 + p { margin-top: 23px; }
.card p { margin-bottom: 10px; }
.card p + p { margin-top: 0; }

.scrollbar { width: 19px; padding: 10px 0 9px 3px; display: flex; flex-direction: column; background: #fcfcfc; }
.thumb { width: 11px; height: 554px; margin: 9px 0 0 1px; border-radius: 6px; background: #8b8b8b; }
.down { margin-top: auto; }

.sidebar { width: 50px; padding: 18px 5px 0 0; display: flex; flex-direction: column; align-items: center; gap: 28px; }
.rule { width: 35px; height: 1px; background: #cfcfcf; }
.side-plus { margin-top: 4px; }
.side-foot { margin-top: auto; display: flex; flex-direction: column; align-items: center; gap: 16px; padding-bottom: 17px; }

.taskbar { height: 60px; flex: none; display: flex; align-items: center; border-top: 1px solid #b5a5b4; background: linear-gradient(90deg, #eed5ea 0, #efd7e8 200px, #ecdadd 300px, #efd6e8 420px, #ecd7e2 720px, #efd5eb 860px, #ecdbe2 1050px, #edd8e0 1260px, #efd6ea 1450px, #f3d9ea 1650px, #ebd9e3 1760px, #f2d7eb 1920px); }
.weather { width: 367px; padding-left: 24px; display: flex; align-items: center; gap: 4px; }
.weather svg { margin-top: -4px; }
.weather-text { margin-top: -2px; display: flex; flex-direction: column; line-height: 20px; letter-spacing: 0; }
.dim { color: #5c5660; }
.start { margin-left: 25.5px; }
.search { width: 274px; height: 39px; margin-left: 17px; padding: 0 3px 0 13px; display: flex; align-items: center; border: 1px solid #dfc9d8; border-bottom-color: #c2aebd; border-radius: 20px; background: #faf4f8; color: #5a565a; font-size: 17px; }
.search > svg:first-child { margin-top: -1px; }
.search span { margin: -1px 0 0 10.5px; letter-spacing: -0.3px; }
.scene { margin-left: auto; }
.apps { margin-left: 6.5px; display: flex; gap: 7px; }
.app { position: relative; width: 48px; height: 48px; display: flex; align-items: center; justify-content: center; border-radius: 5px; }
.app.active { background: #f8eff3; box-shadow: 0 0 1px rgba(0, 0, 0, .3); }
.app.idle::after, .app.active::after { content: ""; position: absolute; bottom: 0; left: 20px; width: 8px; height: 4px; border-radius: 2px; background: #8b7c86; }
.app.active::after { left: 14px; width: 20px; background: #258391; }
.tray { flex: 1; display: flex; align-items: center; }
.t-chev { margin-left: 87px; }
.t-cloud { margin-left: 21px; }
.t-sync { margin-left: 18px; }
.lang, .clock { margin-top: -2px; display: flex; flex-direction: column; line-height: 20px; }
.lang { width: 40px; margin-left: 17px; align-items: center; }
.t-wifi { margin-left: 16px; }
.t-vol { margin-left: 8px; }
.t-bat { margin-left: 8px; }
.clock { width: 84px; margin-left: 15px; align-items: flex-end; }
.date { letter-spacing: 0.24px; }
.t-bell { margin-left: 11px; }
</style>
